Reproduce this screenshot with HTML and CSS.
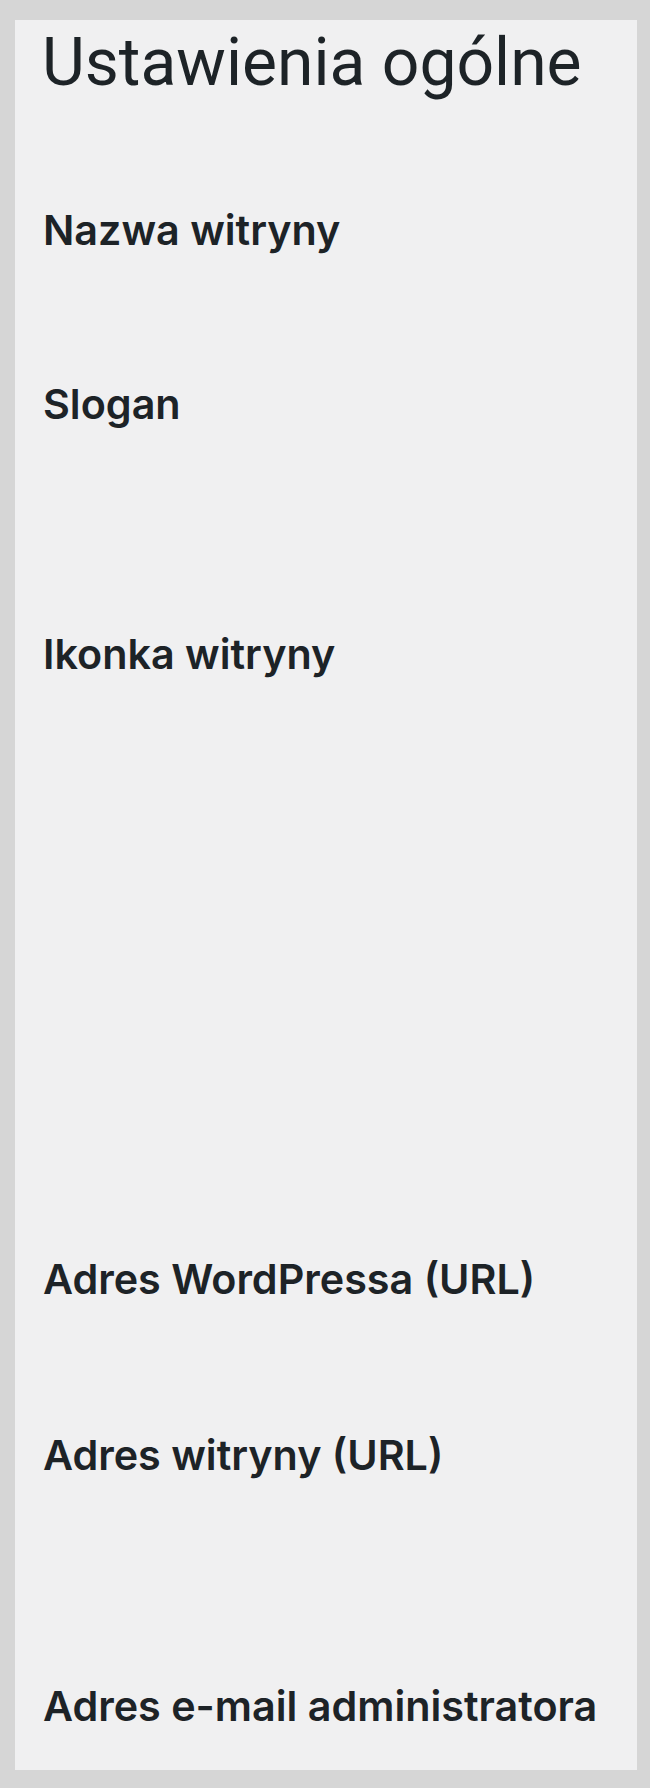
FILE: index.html
```html
<!DOCTYPE html>
<html lang="pl">
<head>
<meta charset="utf-8">
<title>Ustawienia ogólne</title>
<link rel="stylesheet" href="styles.css">
</head>
<body>
<div class="wrap">
  <h1 class="page-title">Ustawienia ogólne</h1>
  <div class="setting">
    <label class="setting-label">Nazwa witryny</label>
    <div class="control control-text"></div>
  </div>
  <div class="setting">
    <label class="setting-label">Slogan</label>
    <div class="control control-desc"></div>
  </div>
  <div class="setting">
    <label class="setting-label">Ikonka witryny</label>
    <div class="control control-icon"></div>
  </div>
  <div class="setting">
    <label class="setting-label">Adres WordPressa (URL)</label>
    <div class="control control-url"></div>
  </div>
  <div class="setting">
    <label class="setting-label">Adres witryny (URL)</label>
    <div class="control control-url-desc"></div>
  </div>
  <div class="setting">
    <label class="setting-label">Adres e-mail administratora</label>
    <div class="control control-last"></div>
  </div>
</div>
</body>
</html>
```

FILE: styles.css
```css
html, body {
  margin: 0;
  padding: 0;
}

body {
  background: #d6d6d6;
  padding: 20px 13px 19px 15px;
  color: #1d2327;
  font-family: Roboto, "Noto Sans", "Liberation Sans", sans-serif;
}

.wrap {
  background: #f0f0f1;
  padding: 0 0 0 27px;
}

.page-title {
  margin: 0;
  font-size: 66px;
  font-weight: 400;
  line-height: 86px;
}

.setting {
  padding-top: 98px;
}

.setting + .setting {
  padding-top: 29px;
}

.setting-label {
  display: block;
  font-family: Inter, Roboto, "Liberation Sans", sans-serif;
  font-size: 41.3px;
  font-weight: 600;
  line-height: 53px;
  padding-left: 1px;
}

.control-text { height: 92px; }
.control-desc { height: 168px; }
.control-icon { height: 543px; }
.control-url { height: 94px; }
.control-url-desc { height: 169px; }
.control-last { height: 37px; }
```
